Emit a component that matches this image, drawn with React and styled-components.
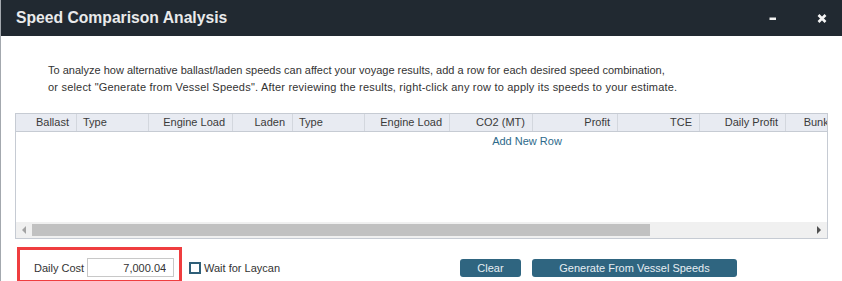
import React from 'react';
import styled, { createGlobalStyle } from 'styled-components';

const GlobalStyle = createGlobalStyle`
  html, body {
    margin: 0;
    padding: 0;
    background: #ffffff;
  }
  body {
    font-family: "Liberation Sans", Arial, sans-serif;
    font-size: 11px;
    color: #333;
  }
`;

const Window = styled.div`
  width: 841px;
  height: 281px;
  border-left: 1px solid #a3a8ae;
  background: #fff;
  display: flex;
  flex-direction: column;
  overflow: hidden;
`;

const TitleBar = styled.div`
  height: 36px;
  flex: none;
  background: #212931;
  display: flex;
  align-items: center;
  justify-content: space-between;
  padding: 0 15px 0 15px;
`;

const Title = styled.div`
  font-size: 15.7px;
  font-weight: bold;
  color: #e9eaeb;
`;

const Controls = styled.div`
  display: flex;
  align-items: center;
  gap: 39px;
`;

const IconButton = styled.button`
  border: none;
  background: transparent;
  padding: 0;
  width: 10px;
  height: 10px;
  display: flex;
  align-items: center;
  justify-content: center;
  cursor: pointer;
`;

const Body = styled.div`
  flex: 1;
  display: flex;
  flex-direction: column;
  padding: 26px 0 0 14px;
`;

const Intro = styled.div`
  margin: 0 0 17px 33px;
  color: #333;
`;

const IntroLine = styled.div`
  line-height: 17px;
  white-space: nowrap;
  letter-spacing: ${p => p.$spacing || 0}px;
`;

const Grid = styled.div`
  width: 811px;
  border: 1px solid #c6cbd3;
  display: flex;
  flex-direction: column;
`;

const Viewport = styled.div`
  overflow: hidden;
  height: 108px;
`;

const Content = styled.div`
  width: ${p => p.$width}px;
`;

const HeaderRow = styled.div`
  display: flex;
  height: 17px;
  background: #e8ebf2;
  border-bottom: 1px solid #c6cbd3;
`;

const HeaderCell = styled.div`
  flex: none;
  width: ${p => p.$w}px;
  box-sizing: border-box;
  border-right: 1px solid #d3d7de;
  line-height: 17px;
  padding: 0 7px 0 6px;
  text-align: ${p => (p.$left ? 'left' : 'right')};
  white-space: nowrap;
  overflow: hidden;
  color: #3a3a3a;
`;

const AddRow = styled.div`
  height: 18px;
  line-height: 18px;
  text-align: center;
  color: #2d6a8b;
  cursor: pointer;
`;

const ScrollBar = styled.div`
  height: 16px;
  background: #f0f0f0;
  display: flex;
  align-items: center;
`;

const Arrow = styled.div`
  flex: none;
  width: 16px;
  height: 16px;
  display: flex;
  align-items: center;
  justify-content: center;
  &::before {
    content: '';
    width: 0;
    height: 0;
    border-top: 4px solid transparent;
    border-bottom: 4px solid transparent;
    ${p =>
      p.$dir === 'left'
        ? 'border-right: 4px solid #a3a3a3;'
        : 'border-left: 4px solid #505050;'}
  }
`;

const Track = styled.div`
  flex: 1;
  height: 12px;
  position: relative;
`;

const Thumb = styled.div`
  position: absolute;
  top: 0;
  height: 12px;
  background: #c1c1c1;
`;

const Footer = styled.div`
  display: grid;
  grid-template-columns: 443px auto;
  align-items: center;
  margin-top: 8px;
  margin-left: 2px;
`;

const LeftGroup = styled.div`
  display: flex;
  align-items: center;
`;

const Highlight = styled.div`
  display: flex;
  align-items: center;
  width: 165px;
  box-sizing: border-box;
  border: 3px solid #ef3d3f;
  padding: 8px 0 3px 14px;
`;

const Label = styled.label`
  color: #333;
  margin-right: 3px;
`;

const CostInput = styled.input`
  width: 87px;
  height: 19px;
  box-sizing: border-box;
  border: 1px solid #c8c8c8;
  padding: 0 7px 0 4px;
  text-align: right;
  font-family: "Liberation Sans", Arial, sans-serif;
  font-size: 11px;
  color: #333;
  outline: none;
`;

const CheckWrap = styled.label`
  display: flex;
  align-items: center;
  margin-left: 7px;
  margin-top: 6px;
  gap: 3px;
  color: #333;
`;

const Box = styled.span`
  width: 12px;
  height: 12px;
  box-sizing: border-box;
  border: 2px solid #2f5f78;
  background: #fff;
`;

const Actions = styled.div`
  display: flex;
  gap: 11px;
  margin-top: 6px;
`;

const ActionButton = styled.button`
  width: ${p => p.$w}px;
  height: 18px;
  border: none;
  border-radius: 3px;
  background: #2f6580;
  color: #e6eef3;
  font-family: "Liberation Sans", Arial, sans-serif;
  font-size: 11px;
  padding: 0;
  cursor: pointer;
`;

const columns = [
  { label: 'Ballast', w: 61 },
  { label: 'Type', w: 72, left: true },
  { label: 'Engine Load', w: 84 },
  { label: 'Laden', w: 60 },
  { label: 'Type', w: 72, left: true },
  { label: 'Engine Load', w: 85 },
  { label: 'CO2 (MT)', w: 83 },
  { label: 'Profit', w: 85 },
  { label: 'TCE', w: 82 },
  { label: 'Daily Profit', w: 86 },
  { label: 'Bunkers', w: 66 },
  { label: 'Port Costs', w: 85 },
  { label: 'Days', w: 101 },
];

const contentWidth = 1022;
const visibleWidth = 811;

function SpeedComparison() {
  const trackWidth = visibleWidth - 32;
  const thumbWidth = Math.round((trackWidth * visibleWidth) / contentWidth);

  return (
    <Window>
      <TitleBar>
        <Title>Speed Comparison Analysis</Title>
        <Controls>
          <IconButton aria-label="minimize">
            <svg width="8" height="10" viewBox="0 0 8 10">
              <rect x="0.5" y="4.5" width="6.5" height="2.5" fill="#f2f2f2" />
            </svg>
          </IconButton>
          <IconButton aria-label="close">
            <svg width="10" height="9" viewBox="0 0 10 9">
              <path d="M1.5 1 L8.5 8 M8.5 1 L1.5 8" stroke="#f5f5f5" strokeWidth="2.6" />
            </svg>
          </IconButton>
        </Controls>
      </TitleBar>
      <Body>
        <Intro>
          <IntroLine>
            To analyze how alternative ballast/laden speeds can affect your voyage results, add a row for each desired speed combination,
          </IntroLine>
          <IntroLine $spacing={0.2}>
            or select "Generate from Vessel Speeds". After reviewing the results, right-click any row to apply its speeds to your estimate.
          </IntroLine>
        </Intro>
        <Grid>
          <Viewport>
            <Content $width={contentWidth}>
              <HeaderRow>
                {columns.map((c, i) => (
                  <HeaderCell key={i} $w={c.w} $left={c.left}>
                    {c.label}
                  </HeaderCell>
                ))}
              </HeaderRow>
              <AddRow>Add New Row</AddRow>
            </Content>
          </Viewport>
          <ScrollBar>
            <Arrow $dir="left" />
            <Track>
              <Thumb style={{ left: 0, width: thumbWidth }} />
            </Track>
            <Arrow $dir="right" />
          </ScrollBar>
        </Grid>
        <Footer>
          <LeftGroup>
            <Highlight>
              <Label>Daily Cost</Label>
              <CostInput defaultValue="7,000.04" />
            </Highlight>
            <CheckWrap>
              <Box />
              Wait for Laycan
            </CheckWrap>
          </LeftGroup>
          <Actions>
            <ActionButton $w={61}>Clear</ActionButton>
            <ActionButton $w={205}>Generate From Vessel Speeds</ActionButton>
          </Actions>
        </Footer>
      </Body>
    </Window>
  );
}

export default function App() {
  return (
    <>
      <GlobalStyle />
      <SpeedComparison />
    </>
  );
}
